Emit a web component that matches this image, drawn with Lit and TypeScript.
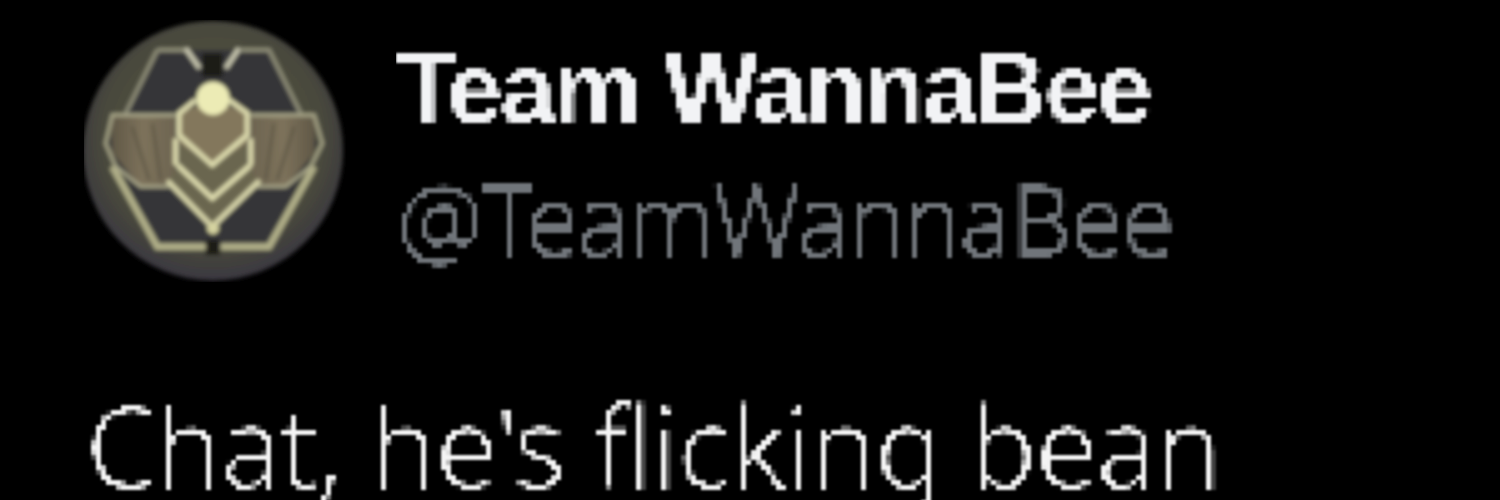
import { LitElement, html, css } from "lit";
import { customElement } from "lit/decorators.js";

@customElement("app-root")
export class AppRoot extends LitElement {
  static styles = css`
    :host { display: block; width: 1500px; height: 500px; background: #000; overflow: hidden; }
    .defs { width: 0; height: 0; display: block; }
    .page { display: flex; flex-direction: column; height: 500px; padding: 20px 0 0 84px; box-sizing: border-box; }
    .head { display: flex; gap: 50px; align-items: flex-start; }
    .avatar { width: 262px; height: 262px; flex: none; display: block; }
    .names { display: flex; flex-direction: column; padding-top: 13px; }
    .name { font: 700 100px/110px "Liberation Sans", sans-serif; color: #f2f3f5; letter-spacing: -2.7px; white-space: nowrap; filter: url(#pix); padding: 0 10px 0 0; }
    .handle { font: 300 98px/110px "Noto Sans", "Liberation Sans", sans-serif; color: #70757a; letter-spacing: -2.2px; margin-top: 20px; white-space: nowrap; margin-left: 1px; filter: url(#pixThin); padding-right: 10px; }
    .body { font: 300 112px/130px "Noto Sans", "Liberation Sans", sans-serif; color: #f4f4f4; letter-spacing: -0.9px; margin: 98px 0 0 2px; white-space: nowrap; filter: url(#pix); padding-right: 10px; }
  `;
  render() {
    return html`<svg class="defs" aria-hidden="true">
        <defs>
          <filter id="pix" x="0" y="0" width="1" height="1" primitiveUnits="userSpaceOnUse" color-interpolation-filters="sRGB">
            <feFlood x="2" y="2" width="1" height="1" flood-color="#fff"/>
            <feComposite width="5" height="5"/>
            <feTile result="grid"/>
            <feComposite in="SourceGraphic" in2="grid" operator="in"/>
            <feMorphology operator="dilate" radius="2"/>
            <feGaussianBlur stdDeviation="0.9"/>
          </filter>
          <filter id="pixThin" x="0" y="0" width="1" height="1" primitiveUnits="userSpaceOnUse" color-interpolation-filters="sRGB">
            <feFlood x="2" y="2" width="1" height="1" flood-color="#fff"/>
            <feComposite width="5" height="5"/>
            <feTile result="grid"/>
            <feMorphology in="SourceGraphic" operator="dilate" radius="0 1" result="thick"/>
            <feComposite in="thick" in2="grid" operator="in"/>
            <feMorphology operator="dilate" radius="2"/>
            <feGaussianBlur stdDeviation="0.9"/>
          </filter>
        </defs>
      </svg>
      <div class="page">
      <div class="head">
        <svg class="avatar" viewBox="45 30 786 786" aria-hidden="true">
          <defs>
            <radialGradient id="bg" cx="50%" cy="45%" r="55%">
              <stop offset="0" stop-color="#55543f"/><stop offset="0.75" stop-color="#4a4a3c"/><stop offset="1" stop-color="#3a3840"/>
            </radialGradient>
            <linearGradient id="wl" x1="0" y1="0" x2="1" y2="0">
              <stop offset="0" stop-color="#5f5746"/><stop offset="0.5" stop-color="#7d725b"/><stop offset="1" stop-color="#6d6450"/>
            </linearGradient>
            <linearGradient id="wr" x1="1" y1="0" x2="0" y2="0">
              <stop offset="0" stop-color="#5f5746"/><stop offset="0.5" stop-color="#7d725b"/><stop offset="1" stop-color="#6d6450"/>
            </linearGradient>
            <filter id="soft"><feGaussianBlur stdDeviation="6"/></filter>
          </defs>
          <g filter="url(#soft)">
            <circle cx="432" cy="422" r="390" fill="url(#bg)"/>
            <path d="M265 120H600L745 400L600 715H265L115 400Z" fill="#353538"/>
            <path d="M400 130H460V200H400Z" fill="#1c1a16"/>
            <path d="M410 690H452V735H410Z" fill="#1c1a16"/>
            <path d="M265 120H350M515 120H600L695 310M265 120L170 310" fill="none" stroke="#8f8e78" stroke-width="12"/>
            <path d="M130 470L265 710H410M735 470L600 710H455" fill="none" stroke="#b0af88" stroke-width="20"/>
            <path d="M350 115L392 175M510 115L470 175" fill="none" stroke="#c9c8b0" stroke-width="14"/>
            <path d="M125 315H320V520L215 530L130 430Z" fill="url(#wl)"/>
            <path d="M740 315H545V520L650 530L735 430Z" fill="url(#wr)"/>
            <path d="M190 350L240 510M250 340L275 510M675 350L625 510M615 340L590 510" fill="none" stroke="#5d5745" stroke-width="8"/>
            <path d="M320 315H130L110 400L140 470L215 530H300M545 315H735L760 400L725 470L650 530H565" fill="none" stroke="#a8a688" stroke-width="10"/>
            <path d="M330 310L430 270L535 310V400L430 465L330 400Z" fill="#83775c"/>
            <path d="M330 400L430 465L535 400V470L430 570L330 470Z" fill="#6a6650"/>
            <path d="M300 510L330 470L430 570L535 470L570 515L430 655Z" fill="#6a6650"/>
            <path d="M380 270L330 310V375L430 465L535 375V310L480 270" fill="none" stroke="#dedcae" stroke-width="15"/>
            <path d="M325 465L430 565L545 465M320 385V465M545 385V465" fill="none" stroke="#dedcae" stroke-width="15"/>
            <path d="M295 512L430 650L572 512" fill="none" stroke="#d8d6aa" stroke-width="15"/>
            <circle cx="432" cy="265" r="50" fill="#ecebb5"/>
            <circle cx="432" cy="655" r="18" fill="#d5d3a0"/>
          </g>
        </svg>
        <div class="names">
          <div class="name">Team WannaBee</div>
          <div class="handle">@TeamWannaBee</div>
        </div>
      </div>
      <div class="body">Chat, he's flicking bean</div>
    </div>`;
  }
}
